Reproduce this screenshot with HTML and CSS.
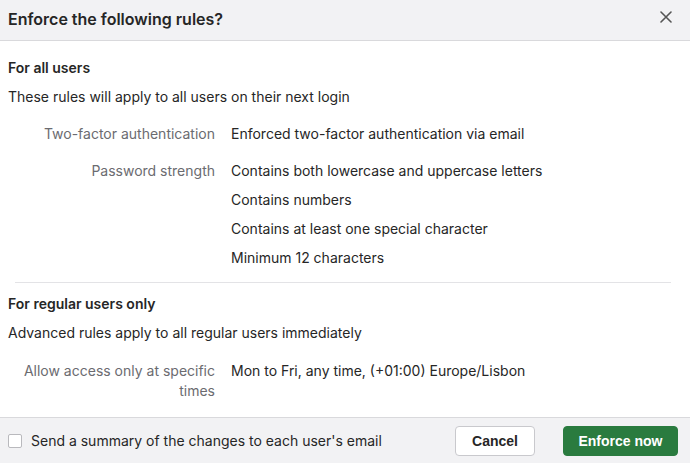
FILE: index.html
```html
<!DOCTYPE html>
<html>
<head>
<meta charset="utf-8">
<link rel="stylesheet" href="styles.css">
</head>
<body>
<div class="dialog">
  <div class="header">
    <h1 class="title">Enforce the following rules?</h1>
    <button class="close" aria-label="Close">
      <svg width="12" height="12" viewBox="0 0 12 12"><path d="M1 1L11 11M11 1L1 11" stroke="#555" stroke-width="1.6" stroke-linecap="round"/></svg>
    </button>
  </div>
  <div class="content">
    <section class="section">
      <h2 class="section-title">For all users</h2>
      <p class="section-desc">These rules will apply to all users on their next login</p>
      <div class="rules">
        <div class="rule">
          <div class="rule-label">Two-factor authentication</div>
          <div class="rule-values"><div>Enforced two-factor authentication via email</div></div>
        </div>
        <div class="rule rule-gap">
          <div class="rule-label">Password strength</div>
          <div class="rule-values">
            <div>Contains both lowercase and uppercase letters</div>
            <div>Contains numbers</div>
            <div>Contains at least one special character</div>
            <div>Minimum 12 characters</div>
          </div>
        </div>
      </div>
    </section>
    <hr class="divider">
    <section class="section section-2">
      <h2 class="section-title">For regular users only</h2>
      <p class="section-desc">Advanced rules apply to all regular users immediately</p>
      <div class="rules rules-2">
        <div class="rule">
          <div class="rule-label">Allow access only at specific times</div>
          <div class="rule-values"><div>Mon to Fri, any time, (+01:00) Europe/Lisbon</div></div>
        </div>
      </div>
    </section>
  </div>
  <div class="footer">
    <label class="notify">
      <span class="checkbox"></span>
      <span>Send a summary of the changes to each user's email</span>
    </label>
    <div class="actions">
      <button class="btn btn-secondary">Cancel</button>
      <button class="btn btn-primary">Enforce now</button>
    </div>
  </div>
</div>
</body>
</html>
```
FILE: styles.css
```css
* { box-sizing: border-box; }
html, body { margin: 0; padding: 0; background: #fff; }
body {
  font-family: Inter, "Noto Sans", sans-serif;
  color: #262626;
  font-size: 14px;
}
.dialog {
  width: 690px;
  height: 463px;
  display: flex;
  flex-direction: column;
}
.header {
  height: 41px;
  background: #f2f2f4;
  border-bottom: 1px solid #d9d9dc;
  display: flex;
  align-items: center;
  justify-content: space-between;
  padding: 0 18px 0 8px;
  flex-shrink: 0;
}
.title {
  margin: 0;
  font-size: 16px;
  font-weight: 600;
  line-height: 20px;
  color: #262626;
  padding-bottom: 3px;
}
.close {
  border: 0;
  background: none;
  padding: 0;
  width: 12px;
  height: 12px;
  display: flex;
  margin-bottom: 6px;
}
.content {
  flex: 1;
  padding: 17px 19px 0 8px;
}
.section-title {
  margin: 0;
  font-size: 14px;
  font-weight: 600;
  line-height: 20px;
}
.section-desc {
  margin: 9px 0 0;
  line-height: 20px;
}
.rules {
  margin-top: 17px;
  padding-left: 7px;
  display: flex;
  flex-direction: column;
}
.rules-2 { margin-top: 18px; }
.rule {
  display: grid;
  grid-template-columns: 200px 1fr;
  column-gap: 16px;
  line-height: 20px;
}
.rule-gap { margin-top: 17px; }
.rule-label {
  color: #6b6b70;
  text-align: right;
}
.rule-values {
  display: flex;
  flex-direction: column;
  gap: 9px;
}
.divider {
  border: 0;
  border-top: 1px solid #e3e3e6;
  margin: 14px 0 0 7px;
  height: 0;
}
.section-2 { margin-top: 11px; }
.footer {
  height: 46px;
  flex-shrink: 0;
  background: #f2f2f4;
  border-top: 1px solid #d9d9dc;
  display: flex;
  align-items: center;
  justify-content: space-between;
  padding: 0 12px 0 8px;
}
.notify {
  display: flex;
  align-items: center;
  gap: 9px;
  line-height: 20px;
}
.checkbox {
  width: 14px;
  height: 14px;
  border: 1px solid #b9b9bd;
  border-radius: 2px;
  background: #fff;
  display: inline-block;
}
.actions {
  display: flex;
  gap: 28px;
}
.btn {
  height: 30px;
  border-radius: 4px;
  font-family: "Liberation Sans", Arial, sans-serif;
  font-weight: 700;
  font-size: 14px;
  padding: 0;
}
.btn-secondary {
  width: 80px;
  background: #fff;
  border: 1px solid #c9c9cd;
  color: #262626;
}
.btn-primary {
  width: 115px;
  background: #2a7b3f;
  border: 1px solid #2a7b3f;
  color: #fff;
}
```
